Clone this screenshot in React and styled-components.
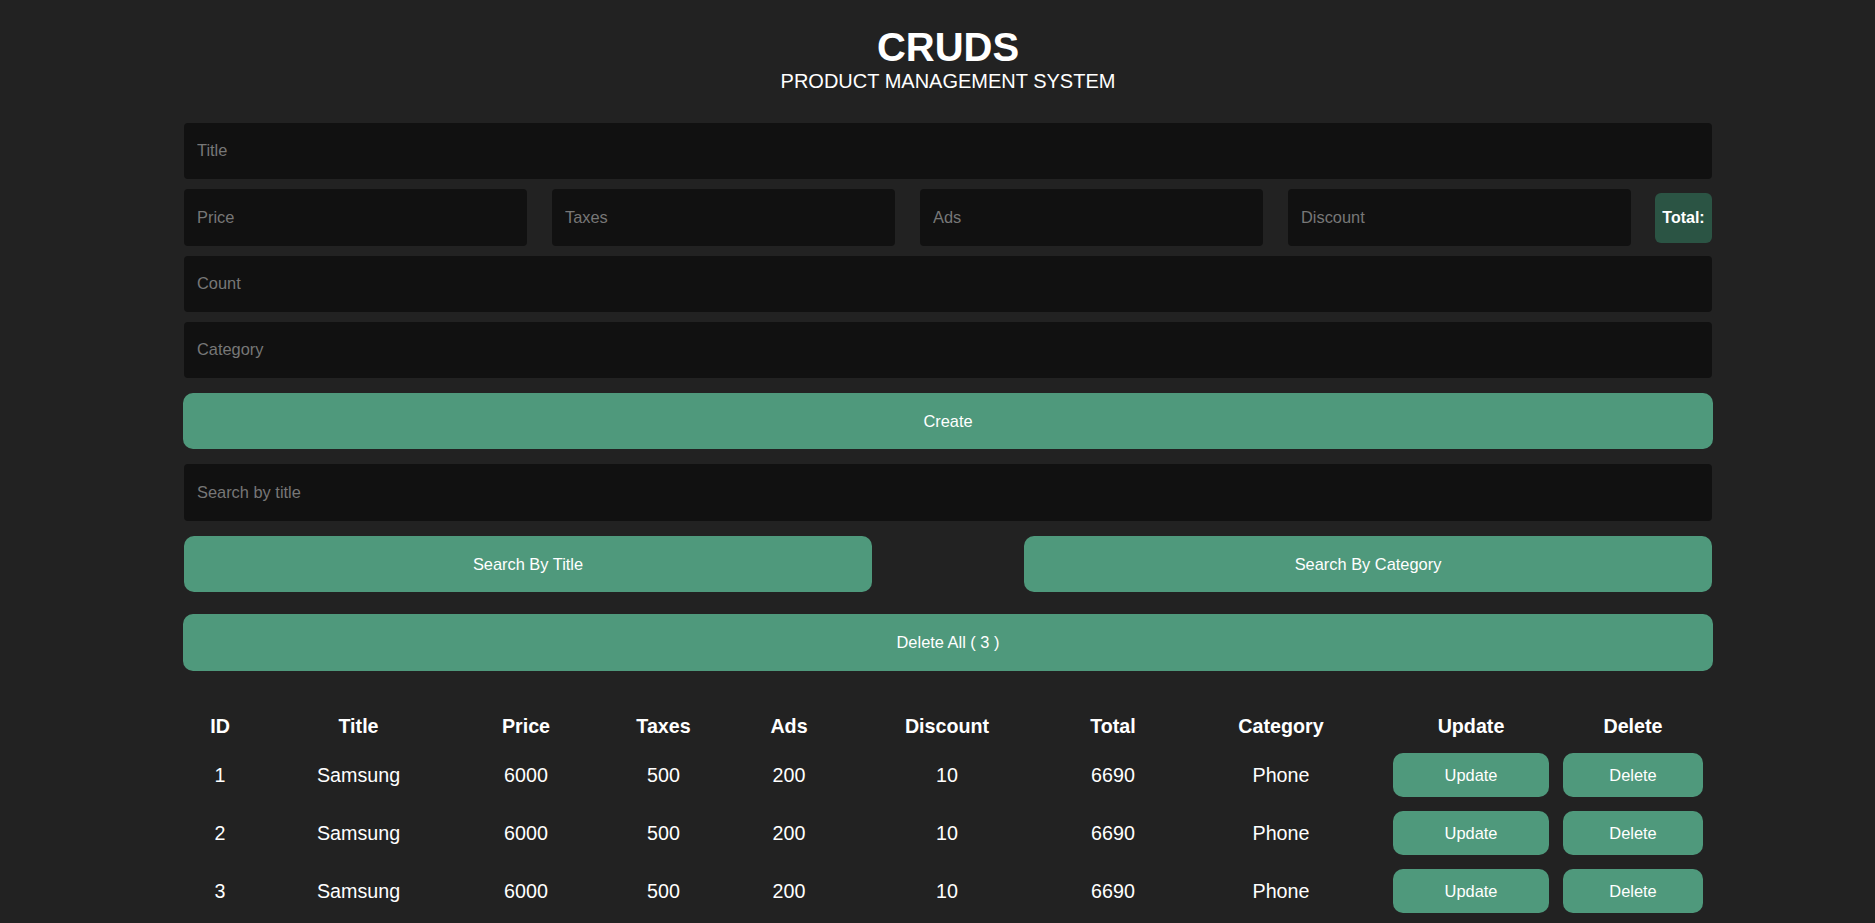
import React from "react";
import styled, { createGlobalStyle } from "styled-components";

const GlobalStyle = createGlobalStyle`
	* {
		box-sizing: border-box;
	}
	body {
		margin: 0;
		background: #222222;
		color: #ffffff;
		font-family: "Liberation Sans", Arial, sans-serif;
	}
`;

const products = [
	{ id: 1, title: "Samsung", price: 6000, taxes: 500, ads: 200, discount: 10, total: 6690, category: "Phone" },
	{ id: 2, title: "Samsung", price: 6000, taxes: 500, ads: 200, discount: 10, total: 6690, category: "Phone" },
	{ id: 3, title: "Samsung", price: 6000, taxes: 500, ads: 200, discount: 10, total: 6690, category: "Phone" },
];

const columns = [
	{ label: "ID", width: 72 },
	{ label: "Title", width: 205 },
	{ label: "Price", width: 130 },
	{ label: "Taxes", width: 145 },
	{ label: "Ads", width: 106 },
	{ label: "Discount", width: 210 },
	{ label: "Total", width: 122 },
	{ label: "Category", width: 214 },
	{ label: "Update", width: 166 },
	{ label: "Delete", width: 158 },
];

const App = () => {
	return (
		<>
			<GlobalStyle />
			<Main>
				<Head>
					<Brand>CRUDS</Brand>
					<Subtitle>PRODUCT MANAGEMENT SYSTEM</Subtitle>
				</Head>
				<Form>
					<Input placeholder="Title" />
					<PriceRow>
						<Input placeholder="Price" />
						<Input placeholder="Taxes" />
						<Input placeholder="Ads" />
						<Input placeholder="Discount" />
						<TotalBox>Total:</TotalBox>
					</PriceRow>
					<Input placeholder="Count" />
					<Input placeholder="Category" />
					<Button $top={15}>Create</Button>
				</Form>
				<Search>
					<Input placeholder="Search by title" />
					<SearchButtons>
						<HalfButton>Search By Title</HalfButton>
						<HalfButton>Search By Category</HalfButton>
					</SearchButtons>
					<Button $top={22} $h={57}>Delete All ( 3 )</Button>
				</Search>
				<Table>
					<colgroup>
						{columns.map((c) => (
							<col key={c.label} style={{ width: c.width }} />
						))}
					</colgroup>
					<thead>
						<tr>
							{columns.map((c) => (
								<Th key={c.label}>{c.label}</Th>
							))}
						</tr>
					</thead>
					<tbody>
						{products.map((p) => (
							<tr key={p.id}>
								<Td>{p.id}</Td>
								<Td>{p.title}</Td>
								<Td>{p.price}</Td>
								<Td>{p.taxes}</Td>
								<Td>{p.ads}</Td>
								<Td>{p.discount}</Td>
								<Td>{p.total}</Td>
								<Td>{p.category}</Td>
								<Td>
									<RowButton $w={156}>Update</RowButton>
								</Td>
								<Td>
									<RowButton $w={140}>Delete</RowButton>
								</Td>
							</tr>
						))}
					</tbody>
				</Table>
			</Main>
		</>
	);
};

const Main = styled.main`
	width: 1528px;
	margin-left: 184px;
`;

const Head = styled.header`
	text-align: center;
	padding-top: 24px;
`;

const Brand = styled.h1`
	margin: 0;
	font-size: 40px;
	font-weight: bold;
	line-height: 46px;
`;

const Subtitle = styled.p`
	margin: 0;
	font-size: 20px;
	line-height: 23px;
`;

const Form = styled.div`
	margin-top: 30px;
	display: flex;
	flex-direction: column;
	gap: 10px;
`;

const Input = styled.input`
	width: 100%;
	height: 56px;
	border: none;
	outline: none;
	border-radius: 4px;
	background: #111111;
	color: #ffffff;
	padding: 0 13px 1px;
	font-family: inherit;
	font-size: 16.4px;

	&::placeholder {
		color: #777777;
	}
`;

const PriceRow = styled.div`
	display: flex;
	align-items: center;
	gap: 25px;

	& > input {
		width: 343px;
		height: 57px;
		flex: none;
	}
`;

const TotalBox = styled.div`
	margin-left: -1px;
	width: 57px;
	height: 50px;
	display: flex;
	align-items: center;
	justify-content: center;
	background: #2b5444;
	border-radius: 6px;
	font-size: 16px;
	font-weight: bold;
`;

const Button = styled.button`
	display: block;
	width: calc(100% + 2px);
	height: ${(p) => p.$h || 56}px;
	margin: ${(p) => p.$top - 10}px -1px 0;
	border: none;
	border-radius: 10px;
	background: #4f997c;
	color: #ffffff;
	font-family: inherit;
	font-size: 16.4px;
	cursor: pointer;
`;

const Search = styled.div`
	margin-top: 15px;
	display: flex;
	flex-direction: column;
	gap: 10px;

	& > input {
		height: 57px;
	}
`;

const SearchButtons = styled.div`
	margin-top: 5px;
	display: flex;
	justify-content: space-between;
`;

const HalfButton = styled.button`
	width: 688px;
	height: 56px;
	border: none;
	border-radius: 10px;
	background: #4f997c;
	color: #ffffff;
	font-family: inherit;
	font-size: 16.4px;
	cursor: pointer;
`;

const Table = styled.table`
	width: 100%;
	margin-top: 35px;
	border-collapse: collapse;
	table-layout: fixed;
	text-align: center;
	font-size: 19.7px;
`;

const Th = styled.th`
	height: 40px;
	padding: 0;
	font-weight: bold;
`;

const Td = styled.td`
	height: 58px;
	padding: 0;
	vertical-align: middle;
`;

const RowButton = styled.button`
	width: ${(p) => p.$w}px;
	height: 44px;
	border: none;
	border-radius: 10px;
	background: #4f997c;
	color: #ffffff;
	font-family: inherit;
	font-size: 16.4px;
	cursor: pointer;
`;

export default App;
